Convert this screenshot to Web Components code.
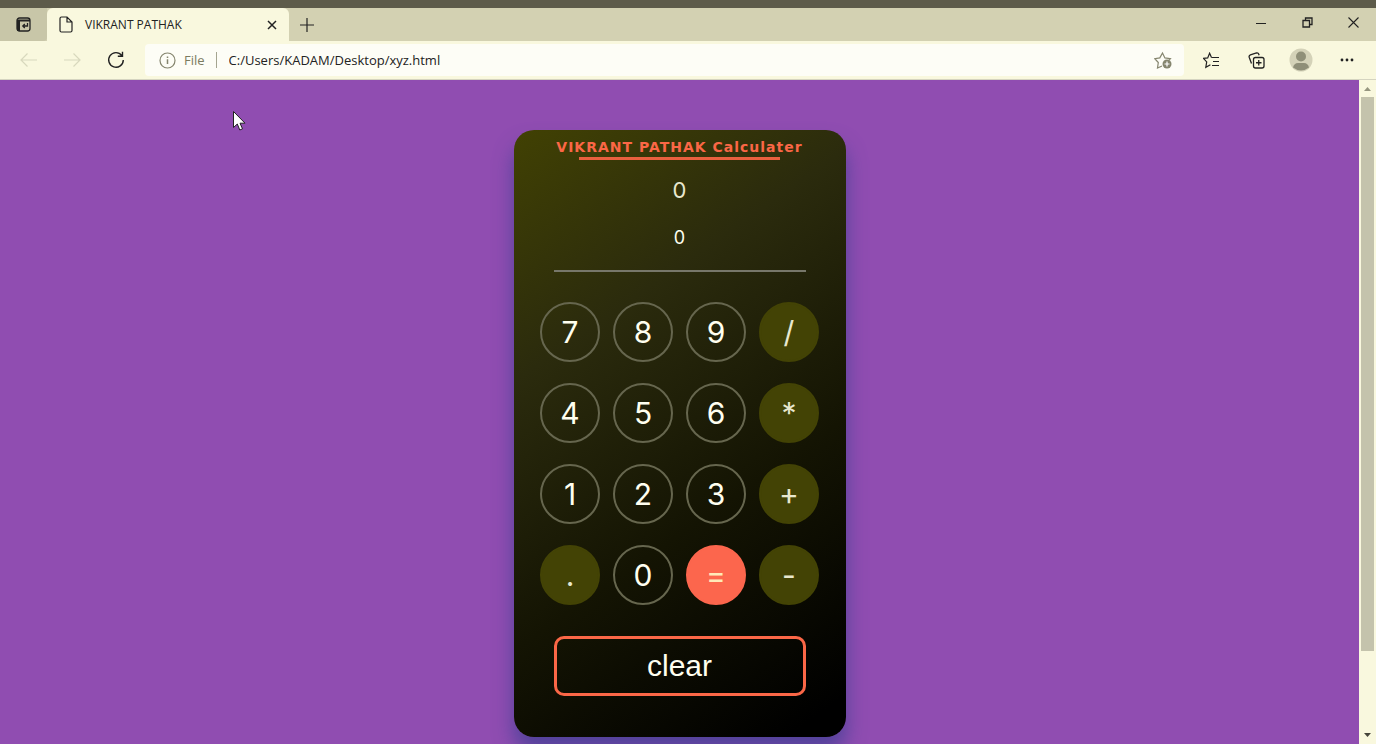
<!DOCTYPE html>
<html lang="en">
<head>
<meta charset="utf-8">
<title>VIKRANT PATHAK</title>
<style>
html,body{margin:0;height:100%}
body{font-family:"Open Sans","Noto Sans",sans-serif;overflow:hidden}
</style>
</head>
<body>
<browser-window>
  <tab-strip slot="tabs">VIKRANT PATHAK</tab-strip>
  <address-bar slot="toolbar" url="C:/Users/KADAM/Desktop/xyz.html"></address-bar>
  <calc-card>VIKRANT PATHAK Calculater</calc-card>
  <scroll-track slot="scrollbar"></scroll-track>
  <mouse-pointer slot="pointer"></mouse-pointer>
</browser-window>
<script>
const define = (name, html, setup) => customElements.define(name, class extends HTMLElement {
  constructor() {
    super();
    this.attachShadow({mode: 'open'}).innerHTML = html;
  }
  connectedCallback() { if (setup) setup(this, this.shadowRoot); }
});
const reset = `*{box-sizing:border-box}button{padding:0;margin:0;border:0;background:none;color:inherit;font:inherit;display:grid;place-items:center}svg{display:block;fill:none;stroke:currentColor}`;

define('browser-window', `<style>${reset}
:host{display:flex;flex-direction:column;height:100vh;border-top:8px solid #5d5b4a;box-sizing:border-box;position:relative;background:#d3d1b2}
.view{flex:1;min-height:0;display:flex;border-top:1px solid #d5d4c0}
main{flex:1;min-width:0;overflow:hidden;background:#904db1;padding:50px 0;display:flex;justify-content:center;align-items:flex-start}
</style>
<slot name="tabs"></slot><slot name="toolbar"></slot>
<div class="view"><main><slot></slot></main><slot name="scrollbar"></slot></div>
<slot name="pointer"></slot>`);

define('tab-strip', `<style>${reset}
:host{display:flex;height:33px;color:#222;font-size:12px}
.actions{width:47px;background:#c8c6a8;border-radius:0 0 4px 0}
.tab{width:242px;background:#f9f8de;border-radius:6px 6px 0 0;display:flex;align-items:center;padding:0 9px 0 12px}
.title{flex:1;padding-left:12px;white-space:nowrap}
.tab button{width:16px;height:16px}
.new{width:36px}
.controls{margin-left:auto;display:flex}
.controls button{width:46px;height:29px}
</style>
<button class="actions" aria-label="Tab actions"><svg width="15" height="15" viewBox="0 0 15 15" stroke-width="1.3"><rect x="1" y="1" width="13" height="13" rx="2.5"/><path d="M1 2.500h13v2H4V14H1z" fill="currentColor" stroke="none"/><path d="M11.500 6v3H7M8.800 7 6.800 9l2 2"/></svg></button>
<div class="tab"><svg width="14" height="17" viewBox="0 0 14 17" stroke-width="1.2"><path d="M2.500 1H8l5 5v8.500a1.500 1.500 0 0 1-1.500 1.500h-9A1.500 1.500 0 0 1 1 14.500v-12A1.500 1.500 0 0 1 2.500 1zM8 1v5h5"/></svg>
<span class="title"><slot></slot></span>
<button aria-label="Close tab"><svg width="10" height="10" viewBox="0 0 10 10" stroke-width="1.5"><path d="m1 1 8 8M9 1 1 9"/></svg></button></div>
<button class="new" aria-label="New tab"><svg width="14" height="14" viewBox="0 0 14 14" stroke-width="1.2"><path d="M7 0v14M0 7h14"/></svg></button>
<div class="controls">
<button aria-label="Minimize"><svg width="10" height="10" viewBox="0 0 10 10"><path d="M0 5.500h10"/></svg></button>
<button aria-label="Restore"><svg width="11" height="11" viewBox="0 0 11 11" stroke-width="1.3"><path d="M1 3.500h6.500V10H1zM3.500 3V1H10v6.500H8"/></svg></button>
<button aria-label="Close"><svg width="11" height="11" viewBox="0 0 11 11" stroke-width="1.1"><path d="m.5.5 10 10M10.500.5l-10 10"/></svg></button>
</div>`);

define('address-bar', `<style>${reset}
:host{display:flex;align-items:center;height:38px;background:#f9f8de;color:#222;padding:0 6px}
.nav{width:44px;height:32px}
.off{color:#d8d8bd}
.box{flex:1;min-width:0;margin:0 6px 0 7px;height:32px;background:#fdfdf6;border-radius:4px;display:flex;align-items:center;padding:0 12px 0 14px;font-size:13px}
.box label{margin:0 12px 0 8px;color:#7b7b60;padding-right:11px;border-right:1px solid #a5a590;line-height:16px}
.box svg{color:#85856e;flex:none}
input{flex:1;min-width:0;border:0;padding:0;background:none;font:inherit;color:#222;outline:0}
.tool{width:46px;height:32px}
.tool.fav,.tool.col{width:44px}
</style>
<button class="nav off" aria-label="Back"><svg width="17" height="14" viewBox="0 0 17 14" stroke-width="1.2"><path d="M17 7H1M7.500.5 1 7l6.500 6.500"/></svg></button>
<button class="nav off" aria-label="Forward"><svg width="17" height="14" viewBox="0 0 17 14" stroke-width="1.2"><path d="M0 7h16M9.500.5 16 7l-6.500 6.500"/></svg></button>
<button class="nav" aria-label="Refresh"><svg width="18" height="18" viewBox="0 0 18 18" stroke-width="1.4"><path d="M14.800 4.500A7.300 7.300 0 1 0 16.300 9M15.500.8v4.400h-4.700"/></svg></button>
<div class="box"><svg width="17" height="17" viewBox="0 0 17 17" stroke-width="1.2"><circle cx="8.500" cy="8.500" r="7.500"/><path d="M8.500 7.300V12M8.500 4.500v1.400" stroke-width="1.500"/></svg>
<label for="url">File</label><input id="url">
<button aria-label="Add to favorites"><svg width="18" height="18" viewBox="0 0 18 18" stroke-width="1.2"><path d="M8 15 3.500 17l.8-5.500L.8 7.700l5-.8L8.500 2l2.400 4.900 5.500.8-1.600 1.600"/><circle cx="13" cy="13" r="4.500" fill="currentColor" stroke="none"/><path d="M13 10.500v5M10.500 13h5" stroke="#fff"/></svg></button></div>
<button class="tool fav" aria-label="Favorites"><svg width="18" height="17" viewBox="0 0 18 17" stroke-width="1.2"><path d="M8.500 5.500 6.600 1.200 4.700 5.900l-4.200.5 3.200 3.500-.9 5.400 4.600-2.600M8.500 5.500H16M10 9.500h6M9 13.500h7"/></svg></button>
<button class="tool col" aria-label="Collections"><svg width="17" height="17" viewBox="0 0 17 17" stroke-width="1.3"><rect x="5.500" y="5.500" width="10.500" height="10.500" rx="2"/><path d="M10.750 8v5.500M8 10.750h5.500M3.500 11.500 1.200 5.200A2 2 0 0 1 2.400 2.800L8.500 1a2 2 0 0 1 2.300 1.300l.3 1"/></svg></button>
<button class="tool" aria-label="Profile"><svg width="24" height="24" viewBox="0 0 24 24" stroke="none"><g stroke="none"><circle cx="12" cy="12" r="11.500" fill="#d4d2b8"/><circle cx="12" cy="8.500" r="5" fill="#8f8f78"/><path d="M4 19.500Q5 15 9 15h6q4 0 5 4.500-8 6-16 0z" fill="#8f8f78"/></g></svg></button>
<button class="tool" aria-label="Settings and more"><svg width="14" height="4" viewBox="0 0 14 4"><g fill="#222" stroke="none"><circle cx="2" cy="2" r="1.400"/><circle cx="7" cy="2" r="1.400"/><circle cx="12" cy="2" r="1.400"/></g></svg></button>`,
(el, root) => { root.querySelector('input').value = el.getAttribute('url'); });

define('scroll-track', `<style>
:host{width:17px;display:flex;flex-direction:column;align-items:center;background:#f9f8de}
svg{flex:none}
.track{flex:1;width:100%;display:flex;flex-direction:column;padding:0 2px;box-sizing:border-box}
.thumb{height:88%;background:#c4c3ac}
</style>
<svg width="17" height="17"><path d="m5 11 3.500-4L12 11z" fill="#96967f"/></svg>
<div class="track"><div class="thumb"></div></div>
<svg width="17" height="17"><path d="M5 6h7l-3.500 4z" fill="#45453a"/></svg>`);

define('mouse-pointer', `<style>:host{position:absolute;left:232px;top:102px;pointer-events:none}svg{display:block}</style>
<svg width="14" height="22" viewBox="0 0 14 22"><path d="M1.500 1.500v16l3.800-3.500 2.500 6 2.700-1.200L8 13.200h5z" fill="#fff" stroke="#222"/></svg>`);

define('calc-key', `<style>${reset}
:host{display:block}
button{width:60px;height:60px;border-radius:50%;border:2px solid #66664e;color:#fffff0;font-family:Inter,sans-serif;font-size:30px;line-height:36px;cursor:pointer}
:host([kind=op]) button{background:#434305;border-color:#434305;color:#e8e8cf}
:host([kind=equals]) button{background:#fc664d;border-color:#fc664d;color:#ffe9b8}
</style><button><slot></slot></button>`);

define('calc-card', `<style>${reset}
:host{display:flex;flex-direction:column;align-items:center;width:332px;box-sizing:border-box;padding:7px 26px 41px;border-radius:20px;background:linear-gradient(145deg,#414103 0%,#2b2b0d 30%,#141403 62%,#000 95%);box-shadow:0 15px 20px rgba(70,65,150,.85);color:#e8e8d0;font-family:Inter,sans-serif}
h1{margin:0;font-family:"DejaVu Sans",sans-serif;font-size:14px;line-height:20px;font-weight:700;letter-spacing:1px;color:#fb6746;white-space:nowrap}
.rule{width:201px;height:3px;background:#e9603f}
output{display:block;text-align:center}
.expr{font-size:22px;line-height:28px;margin-top:16px}
.result{font-size:18px;line-height:24px;margin-top:22px;color:#fffff0}
.line{width:252px;height:2px;background:#77776a;margin-top:20px}
.keys{display:grid;grid-template-columns:repeat(4,60px);gap:21px 13px;margin:30px 0 31px}
.clear{width:252px;height:60px;border:3px solid #fb6747;border-radius:10px;color:#fffff0;font-family:"Liberation Sans",Arial,sans-serif;font-size:30px;cursor:pointer}
</style>
<h1><slot></slot></h1><div class="rule"></div>
<output class="expr">0</output><output class="result">0</output><div class="line"></div>
<div class="keys">
<calc-key>7</calc-key><calc-key>8</calc-key><calc-key>9</calc-key><calc-key kind="op">/</calc-key>
<calc-key>4</calc-key><calc-key>5</calc-key><calc-key>6</calc-key><calc-key kind="op">*</calc-key>
<calc-key>1</calc-key><calc-key>2</calc-key><calc-key>3</calc-key><calc-key kind="op">+</calc-key>
<calc-key kind="op">.</calc-key><calc-key>0</calc-key><calc-key kind="equals">=</calc-key><calc-key kind="op">-</calc-key>
</div>
<button class="clear">clear</button>`,
(el, root) => {
  const expr = root.querySelector('.expr'), result = root.querySelector('.result');
  let text = '';
  root.querySelector('.keys').addEventListener('click', e => {
    const key = e.target.closest('calc-key');
    if (!key) return;
    if (key.textContent === '=') {
      try { result.textContent = Function('return ' + (text || '0'))(); } catch { result.textContent = 'Error'; }
    } else {
      text += key.textContent;
      expr.textContent = text;
    }
  });
  root.querySelector('.clear').addEventListener('click', () => {
    text = '';
    expr.textContent = result.textContent = '0';
  });
});
</script>
</body>
</html>
